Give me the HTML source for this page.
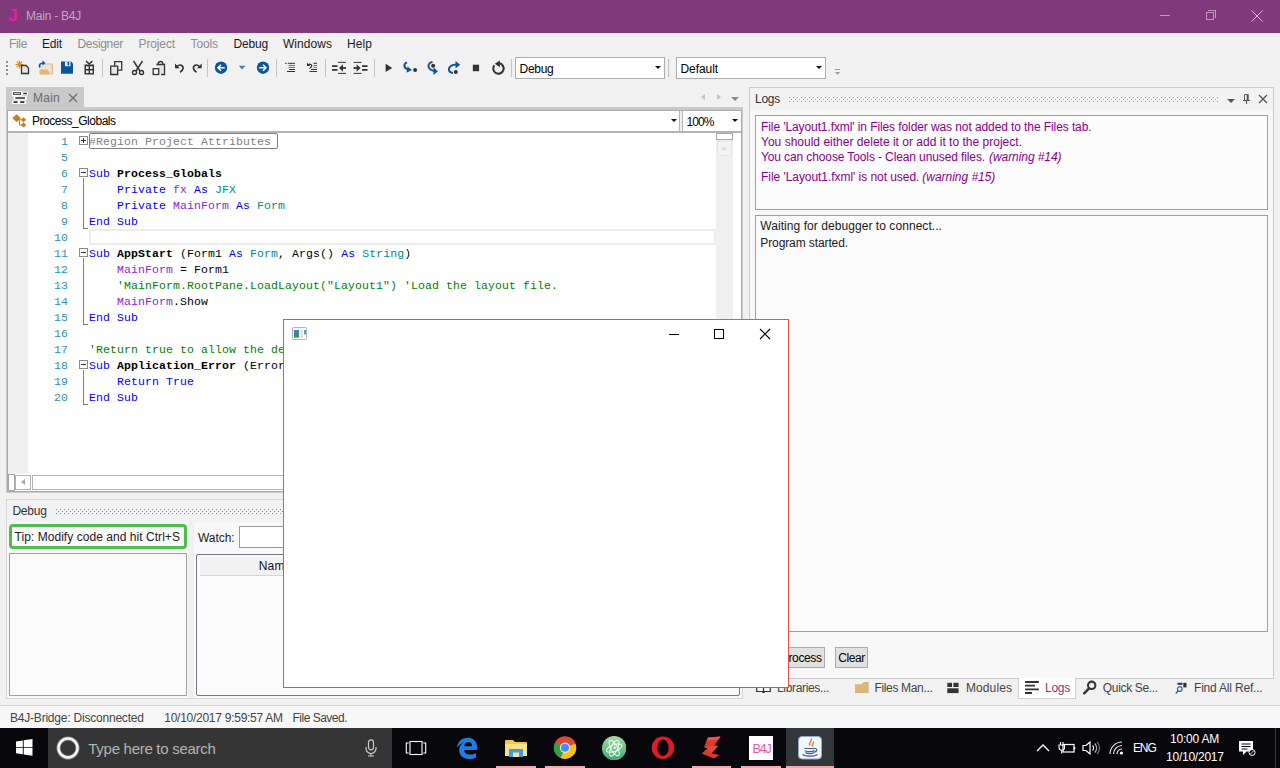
<!DOCTYPE html>
<html><head><meta charset="utf-8"><title>Main - B4J</title>
<style>
*{box-sizing:border-box;margin:0;padding:0}
html,body{width:1280px;height:768px;overflow:hidden;background:#f1f1f1;font-family:"Liberation Sans",sans-serif;font-size:12px;color:#000}
.a{position:absolute}
.t{position:absolute;white-space:nowrap}
.sep{position:absolute;width:1px;background:#c4c4c4;top:59px;height:18px}
.combo{position:absolute;top:57px;height:22px;width:150px;background:#fff;border:1px solid #adadad}
.arr{position:absolute;width:0;height:0;border-left:3px solid transparent;border-right:3px solid transparent;border-top:3px solid #111}
.code{font-family:"Liberation Mono",monospace;font-size:11.5px;letter-spacing:0.1px;line-height:16px;height:16px;position:absolute;white-space:pre;left:89px}
.ln{font-family:"Liberation Mono",monospace;font-size:11.5px;letter-spacing:0.1px;line-height:16px;height:16px;position:absolute;white-space:pre;width:40px;left:28px;text-align:right;color:#2b91af}
.k{color:#0000ff}.ty{color:#008b8b}.v{color:#8c1fd0}.c{color:#008000}.g{color:#808080}.b{font-weight:bold}
.panel{position:absolute;background:#fafafa;border:1px solid #a0a0a0}
</style></head><body>
<div class="a" style="left:0;top:0;width:1280px;height:33px;background:#80397b"></div>
<div class="t" style="left:8px;top:6px;font-size:17px;color:#ec1ea0;line-height:20px;height:20px;letter-spacing:-1.469px;font-weight:bold;">J</div>
<div class="t" style="left:26px;top:8px;font-size:12px;color:#c6a5c4;line-height:16px;height:16px;letter-spacing:-0.236px;">Main - B4J</div>
<div class="a" style="left:1160px;top:15px;width:10px;height:1px;background:#bf9abc"></div>
<div class="a" style="left:1206px;top:12px;width:8px;height:8px;border:1px solid #bf9abc"></div>
<div class="a" style="left:1208px;top:10px;width:8px;height:8px;border-top:1px solid #bf9abc;border-right:1px solid #bf9abc"></div>
<svg class="a" style="left:1251px;top:10px" width="12" height="12" viewBox="0 0 12 12"><path d="M0.500 0.500l11 11M11.500 0.500l-11 11" stroke="#d7bdd5" stroke-width="1"/></svg>
<div class="t" style="left:9px;top:36px;font-size:12px;color:#8d8d8d;line-height:16px;height:16px;letter-spacing:-0.336px;">File</div>
<div class="t" style="left:42px;top:36px;font-size:12px;color:#1b1b1b;line-height:16px;height:16px;letter-spacing:-0.172px;">Edit</div>
<div class="t" style="left:77.5px;top:36px;font-size:12px;color:#8d8d8d;line-height:16px;height:16px;letter-spacing:-0.316px;">Designer</div>
<div class="t" style="left:138.5px;top:36px;font-size:12px;color:#8d8d8d;line-height:16px;height:16px;letter-spacing:-0.123px;">Project</div>
<div class="t" style="left:190.5px;top:36px;font-size:12px;color:#8d8d8d;line-height:16px;height:16px;letter-spacing:-0.103px;">Tools</div>
<div class="t" style="left:233.5px;top:36px;font-size:12px;color:#1b1b1b;line-height:16px;height:16px;letter-spacing:-0.175px;">Debug</div>
<div class="t" style="left:283px;top:36px;font-size:12px;color:#1b1b1b;line-height:16px;height:16px;letter-spacing:0.045px;">Windows</div>
<div class="t" style="left:347px;top:36px;font-size:12px;color:#1b1b1b;line-height:16px;height:16px;letter-spacing:0.078px;">Help</div>
<div class="sep" style="left:102px"></div>
<div class="sep" style="left:207px"></div>
<div class="sep" style="left:276px"></div>
<div class="sep" style="left:325px"></div>
<div class="sep" style="left:374px"></div>
<div class="sep" style="left:511px"></div>
<div class="sep" style="left:668px"></div>
<div class="combo" style="left:515px"><div class="arr" style="left:139px;top:8px"></div></div>
<div class="combo" style="left:676px"><div class="arr" style="left:139px;top:8px"></div></div>
<div class="t" style="left:519.5px;top:61px;font-size:12px;color:#000;line-height:16px;height:16px;letter-spacing:-0.275px;">Debug</div>
<div class="t" style="left:680.5px;top:61px;font-size:12px;color:#000;line-height:16px;height:16px;letter-spacing:-0.076px;">Default</div>
<!-- TOOLBAR-ICONS -->
<svg class="a" style="left:0;top:54px" width="520" height="28" viewBox="0 54 520 28"><rect x="6" y="61" width="2" height="2" fill="#8c8c8c"/><rect x="6" y="65" width="2" height="2" fill="#8c8c8c"/><rect x="6" y="69" width="2" height="2" fill="#8c8c8c"/><rect x="6" y="73" width="2" height="2" fill="#8c8c8c"/><g stroke="#e08a1e" stroke-width="1.200"><path d="M19.500 60.500v8M15.500 64.500h8M16.700 61.700l5.600 5.600M22.300 61.700l-5.600 5.600"/></g><path d="M21.500 65.500h4.500l2.500 2.500v5.500h-7z" fill="#e9e9e9" stroke="#333" stroke-width="1.300"/><path d="M40 64.500h12v10h-12z" fill="#e4e4e4"/><path d="M44 64h8.300v10.800" fill="none" stroke="#e3b877" stroke-width="1.200"/><path d="M39.500 69.500h8l3.500 5h-11.500z" fill="#e3b877"/><path d="M40 67.500c-1.500-2.500 0-4.500 4-4.500" fill="none" stroke="#0a55a0" stroke-width="1.600"/><path d="M42.500 60.500l3 2.500-3 2.500z" fill="#0a55a0"/><path d="M61 61.500h10l2 2v10.300h-12z" fill="#0a55a0"/><rect x="65" y="61.500" width="5.500" height="4.700" fill="#f2f2f2"/><rect x="67.500" y="62" width="1.700" height="3.400" fill="#0a55a0"/><rect x="84.500" y="64.500" width="9.500" height="10" fill="#333"/><path d="M86 61l3.200 3 3.200-3" fill="none" stroke="#333" stroke-width="1.600"/><g fill="#f2f2f2"><rect x="86" y="66.300" width="2.600" height="2.600"/><rect x="90" y="66.300" width="2.600" height="2.600"/><rect x="86" y="70.500" width="2.600" height="2.600"/><rect x="90" y="70.500" width="2.600" height="2.600"/></g><path d="M114.700 61.700h7v8.500h-7z" fill="#f2f2f2" stroke="#333" stroke-width="1.300"/><path d="M110.700 66.200h7v8.300h-7z" fill="#e6e6e6" stroke="#333" stroke-width="1.300"/><g fill="none" stroke="#333" stroke-width="1.400"><path d="M133.500 61l6.500 10M142.500 61l-6.500 10"/><circle cx="134.500" cy="72.500" r="2"/><circle cx="141.500" cy="72.500" r="2"/></g><path d="M156.500 64.500h8v10h-3.500" fill="#e4e4e4" stroke="#333" stroke-width="1.300"/><path d="M158 64.500c0-4 5-4 5 0" fill="none" stroke="#333" stroke-width="1.300"/><rect x="153.200" y="68.700" width="5.500" height="5.800" fill="#f6f6f6" stroke="#333" stroke-width="1.300"/><path d="M177 66.500c3-3 6.500-1 6 2-.3 1.800-1.500 3-3 3.800" fill="none" stroke="#333" stroke-width="1.600"/><path d="M175 63.500v4.800h4.800z" fill="#333"/><path d="M199.500 66.500c-3-3-6.500-1-6 2 .3 1.800 1.500 3 3 3.800" fill="none" stroke="#333" stroke-width="1.600" transform="translate(0,0)"/><path d="M201.700 63.500v4.800h-4.800z" fill="#333"/><circle cx="221" cy="67.700" r="6.200" fill="#0a55a0"/><path d="M224.800 67.700h-6.500M221 64.700l-3 3 3 3" fill="none" stroke="#fff" stroke-width="1.600"/><path d="M238.800 65.800h6.600l-3.300 3.600z" fill="#4a78c0"/><circle cx="263" cy="67.700" r="6.200" fill="#0a55a0"/><path d="M259.200 67.700h6.500M263 64.700l3 3-3 3" fill="none" stroke="#fff" stroke-width="1.600"/><g stroke-width="1"><path d="M285 63.300h1.700M287.800 63.300h7.200M289 69.500h6M287 71.500h8" stroke="#333"/><path d="M288.500 65.400h6.500M288.500 67.400h6.500" stroke="#2e9a2e"/></g><g stroke-width="1"><path d="M313.500 63.300h3.500M311 69.500h6M309.500 71.500h7.500" stroke="#333"/><path d="M313.500 65.400h3.500M313.500 67.400h3.500" stroke="#2e9a2e"/><path d="M308 65.200c2-2 4.500-.5 3.500 1.500l-2 2" fill="none" stroke="#333" stroke-width="1.200"/><path d="M307 62.700v3.300h3.300z" fill="#333"/></g><g stroke="#333"><path d="M338 62.400h8M338 73.400h8" stroke-width="1"/><path d="M332 66.200h5.500M332 69.900h5.500" stroke-width="1.800"/><path d="M346 68h-6" stroke-width="1.800"/></g><path d="M339 68l4-3.800v7.600z" fill="#333"/><g stroke="#333"><path d="M353.600 62.400h8M353.600 73.400h8" stroke-width="1"/><path d="M362 66.200h5.500M362 69.900h5.500" stroke-width="1.800"/><path d="M353.600 68h6" stroke-width="1.800"/></g><path d="M360.600 68l-4-3.800v7.600z" fill="#333"/><path d="M385.600 63.800l6.600 4.100-6.600 4.100z" fill="#333"/><path d="M407 62.300c-3.500 1.500-4 5.500 1.500 7.300" fill="none" stroke="#0a55a0" stroke-width="2"/><path d="M407.500 66.500l4.500 3.500-5.500 2.800z" fill="#0a55a0"/><circle cx="415.100" cy="70" r="2" fill="#333"/><path d="M432.500 62c-5 .5-6.500 8 2.500 9" fill="none" stroke="#0a55a0" stroke-width="2"/><path d="M433.500 67.500l4.500 3.700-4.500 3.700z" fill="#0a55a0"/><circle cx="433.100" cy="65.800" r="2" fill="#333"/><path d="M453 73c-6-.5-6-8 3.500-8.500" fill="none" stroke="#0a55a0" stroke-width="2"/><path d="M455.500 61l4.700 3.700-4.700 3.700z" fill="#0a55a0"/><circle cx="455.800" cy="72" r="2" fill="#333"/><rect x="472.800" y="64.700" width="6.300" height="6.500" fill="#333"/><path d="M494.300 65.300a5.200 5.200 0 1 0 4.700-2" fill="none" stroke="#333" stroke-width="2.100"/><path d="M499.800 60.500l-5 3.300 5 3.400z" fill="#333"/></svg>
<svg class="a" style="left:834px;top:68px" width="7" height="8" viewBox="0 0 7 8"><path d="M1 1.500h5" stroke="#9a9a9a" stroke-width="1"/><path d="M1 4h5l-2.500 3z" fill="#9a9a9a"/></svg>
<div class="a" style="left:6px;top:87px;width:78px;height:21px;background:#c9c9c9"></div>
<div class="a" style="left:6px;top:107px;width:737px;height:4px;background:#c9c9c9"></div>
<div class="t" style="left:33px;top:90px;font-size:12px;color:#6a6a6a;line-height:16px;height:16px;letter-spacing:0.246px;">Main</div>
<svg class="a" style="left:68px;top:93px" width="10" height="10" viewBox="0 0 10 10"><path d="M1 1l8 8M9 1l-8 8" stroke="#6a6a6a" stroke-width="1.200"/></svg>
<div class="a" style="left:6px;top:109px;width:737px;height:384px;background:#fff;border:1px solid #cdcdcd;border-top-color:#c9c9c9;box-shadow:inset 0 0 0 1px #a9a9a9"></div>
<div class="a" style="left:8px;top:131px;width:733px;height:2px;background:#b4b4b4"></div>
<div class="a" style="left:8px;top:133px;width:20px;height:341px;background:#f0f0f0"></div>
<div class="t" style="left:32px;top:113px;font-size:12px;color:#000;line-height:16px;height:16px;letter-spacing:-0.475px;">Process_Globals</div>
<div class="t" style="left:686.4px;top:114px;font-size:12px;color:#000;line-height:16px;height:16px;letter-spacing:-0.851px;">100%</div>
<div class="ln" style="top:133.5px">1</div><div class="code" style="top:133.5px"><span class="g">#Region Project Attributes </span></div>
<div class="ln" style="top:149.5px">5</div><div class="code" style="top:149.5px"></div>
<div class="ln" style="top:165.5px">6</div><div class="code" style="top:165.5px"><span class="k">Sub</span> <span class="b">Process_Globals</span></div>
<div class="ln" style="top:181.5px">7</div><div class="code" style="top:181.5px">    <span class="k">Private</span> <span class="v">fx</span> <span class="k">As</span> <span class="ty">JFX</span></div>
<div class="ln" style="top:197.5px">8</div><div class="code" style="top:197.5px">    <span class="k">Private</span> <span class="v">MainForm</span> <span class="k">As</span> <span class="ty">Form</span></div>
<div class="ln" style="top:213.5px">9</div><div class="code" style="top:213.5px"><span class="k">End Sub</span></div>
<div class="ln" style="top:229.5px">10</div><div class="code" style="top:229.5px"></div>
<div class="ln" style="top:245.5px">11</div><div class="code" style="top:245.5px"><span class="k">Sub</span> <span class="b">AppStart</span> (Form1 <span class="k">As</span> <span class="ty">Form</span>, Args() <span class="k">As</span> <span class="ty">String</span>)</div>
<div class="ln" style="top:261.5px">12</div><div class="code" style="top:261.5px">    <span class="v">MainForm</span> = Form1</div>
<div class="ln" style="top:277.5px">13</div><div class="code" style="top:277.5px">    <span class="c">'MainForm.RootPane.LoadLayout("Layout1") 'Load the layout file.</span></div>
<div class="ln" style="top:293.5px">14</div><div class="code" style="top:293.5px">    <span class="v">MainForm</span>.Show</div>
<div class="ln" style="top:309.5px">15</div><div class="code" style="top:309.5px"><span class="k">End Sub</span></div>
<div class="ln" style="top:325.5px">16</div><div class="code" style="top:325.5px"></div>
<div class="ln" style="top:341.5px">17</div><div class="code" style="top:341.5px"><span class="c">'Return true to allow the default exceptions handler to handle the uncaught exception.</span></div>
<div class="ln" style="top:357.5px">18</div><div class="code" style="top:357.5px"><span class="k">Sub</span> <span class="b">Application_Error</span> (Error <span class="k">As</span> <span class="ty">Exception</span>, StackTrace <span class="k">As</span> <span class="ty">String</span>) <span class="k">As</span> <span class="ty">Boolean</span></div>
<div class="ln" style="top:373.5px">19</div><div class="code" style="top:373.5px">    <span class="k">Return</span> <span class="k">True</span></div>
<div class="ln" style="top:389.5px">20</div><div class="code" style="top:389.5px"><span class="k">End Sub</span></div>
<div class="a" style="left:79px;top:136px;width:9px;height:9px;border:1px solid #8c8c8c;background:#fff"></div><div class="a" style="left:81px;top:140px;width:5px;height:1px;background:#333"></div><div class="a" style="left:83px;top:138px;width:1px;height:5px;background:#333"></div>
<div class="a" style="left:79px;top:168px;width:9px;height:9px;border:1px solid #8c8c8c;background:#fff"></div><div class="a" style="left:81px;top:172px;width:5px;height:1px;background:#333"></div>
<div class="a" style="left:79px;top:248px;width:9px;height:9px;border:1px solid #8c8c8c;background:#fff"></div><div class="a" style="left:81px;top:252px;width:5px;height:1px;background:#333"></div>
<div class="a" style="left:79px;top:360px;width:9px;height:9px;border:1px solid #8c8c8c;background:#fff"></div><div class="a" style="left:81px;top:364px;width:5px;height:1px;background:#333"></div>
<div class="a" style="left:83px;top:178px;width:1px;height:50px;background:#808080"></div>
<div class="a" style="left:83px;top:228px;width:5px;height:1px;background:#808080"></div>
<div class="a" style="left:83px;top:258px;width:1px;height:66px;background:#808080"></div>
<div class="a" style="left:83px;top:324px;width:5px;height:1px;background:#808080"></div>
<div class="a" style="left:83px;top:370px;width:1px;height:34px;background:#808080"></div>
<div class="a" style="left:83px;top:404px;width:5px;height:1px;background:#808080"></div>
<div class="a" style="left:89px;top:133px;width:189px;height:16px;border:1px solid #808080;border-radius:2px"></div>
<div class="a" style="left:89px;top:229px;width:627px;height:16px;border:2px solid #ececec"></div>
<div class="a" style="left:679px;top:111px;width:4px;height:20px;background:#f0f0f0;border-left:1px solid #b4b4b4;border-right:1px solid #b4b4b4"></div>
<div class="arr" style="left:671px;top:119px"></div>
<div class="arr" style="left:732px;top:119px"></div>
<div class="a" style="left:701px;top:94px;width:0;height:0;border-top:3.500px solid transparent;border-bottom:3.500px solid transparent;border-right:4px solid #c3c3c3"></div>
<div class="a" style="left:717px;top:94px;width:0;height:0;border-top:3.500px solid transparent;border-bottom:3.500px solid transparent;border-left:4px solid #c3c3c3"></div>
<div class="a" style="left:731px;top:97px;width:0;height:0;border-left:4px solid transparent;border-right:4px solid transparent;border-top:4px solid #8a8a8a"></div>
<div class="a" style="left:716px;top:133px;width:17px;height:341px;background:#f0f0f0"></div>
<div class="a" style="left:716px;top:133px;width:17px;height:7px;background:#fff;border:1px solid #a8a8a8"></div>
<div class="a" style="left:717px;top:141px;width:15px;height:15px;background:#f3f3f3;border:1px solid #e6e6e6"></div>
<div class="a" style="left:721px;top:146px;width:0;height:0;border-left:3.500px solid transparent;border-right:3.500px solid transparent;border-bottom:4px solid #dcdcdc"></div>
<div class="a" style="left:8px;top:474px;width:733px;height:17px;background:#fff"></div>
<div class="a" style="left:8px;top:474px;width:7px;height:17px;background:#fff;border:1px solid #a8a8a8"></div>
<div class="a" style="left:15px;top:475px;width:16px;height:15px;background:#fff;border:1px solid #b2b2b2"></div>
<div class="a" style="left:21px;top:479px;width:0;height:0;border-top:3.500px solid transparent;border-bottom:3.500px solid transparent;border-right:4px solid #a6a6a6"></div>
<div class="a" style="left:32px;top:475px;width:700px;height:15px;background:#fff;border:1px solid #b2b2b2"></div>
<div class="a" style="left:749px;top:87px;width:525px;height:592px;background:#f8f8f8;border:1px solid #cbcbcb"></div>
<div class="a" style="left:750px;top:88px;width:523px;height:22px;background:#f2f2f2"></div>
<div class="t" style="left:755px;top:91px;font-size:12px;color:#333;line-height:16px;height:16px;letter-spacing:-0.258px;">Logs</div>
<svg class="a" style="left:789px;top:97px" width="430" height="5"><defs><pattern id="dp" width="4" height="4" patternUnits="userSpaceOnUse"><rect x="0" y="0" width="1" height="1" fill="#929292"/><rect x="2" y="2" width="1" height="1" fill="#929292"/><rect x="2" y="0" width="1" height="1" fill="#fafafa"/><rect x="0" y="2" width="1" height="1" fill="#fafafa"/></pattern></defs><rect width="431" height="5" fill="url(#dp)"/></svg>
<div class="a" style="left:1227px;top:99px;width:0;height:0;border-left:4px solid transparent;border-right:4px solid transparent;border-top:4px solid #555"></div>
<svg class="a" style="left:1242px;top:93px" width="9" height="12" viewBox="0 0 9 12"><path d="M2.500 7V1.600h3" fill="none" stroke="#555" stroke-width="1"/><path d="M5.700 1.100v6" stroke="#555" stroke-width="2"/><path d="M1 7.500h7" stroke="#555" stroke-width="1.100"/><path d="M4.500 8v3" stroke="#555" stroke-width="1.100"/></svg>
<svg class="a" style="left:1258px;top:94px" width="10" height="10" viewBox="0 0 10 10"><path d="M1 1l8 8M9 1l-8 8" stroke="#555" stroke-width="1.300"/></svg>
<div class="panel" style="left:755px;top:115px;width:513px;height:95px;background:#fcfcfc"></div>
<div class="t" style="left:761px;top:119px;font-size:12px;color:#8b008b;line-height:16px;height:16px;letter-spacing:-0.093px;">File 'Layout1.fxml' in Files folder was not added to the Files tab.</div>
<div class="t" style="left:761px;top:134px;font-size:12px;color:#8b008b;line-height:16px;height:16px;letter-spacing:0.011px;">You should either delete it or add it to the project.</div>
<div class="t" style="left:761px;top:149px;font-size:12px;color:#8b008b;line-height:16px;height:16px;letter-spacing:-0.115px;">You can choose Tools - Clean unused files.</div>
<div class="t" style="left:989px;top:149px;font-size:12px;color:#8b008b;line-height:16px;height:16px;letter-spacing:-0.067px;font-style:italic;">(warning #14)</div>
<div class="t" style="left:761px;top:169px;font-size:12px;color:#8b008b;line-height:16px;height:16px;letter-spacing:-0.053px;">File 'Layout1.fxml' is not used.</div>
<div class="t" style="left:922.3px;top:169px;font-size:12px;color:#8b008b;line-height:16px;height:16px;letter-spacing:-0.029px;font-style:italic;">(warning #15)</div>
<div class="panel" style="left:755px;top:215px;width:513px;height:417px;background:#fafafa"></div>
<div class="t" style="left:760.3px;top:218px;font-size:12px;color:#1a1a1a;line-height:16px;height:16px;letter-spacing:0.060px;">Waiting for debugger to connect...</div>
<div class="t" style="left:760.3px;top:235px;font-size:12px;color:#1a1a1a;line-height:16px;height:16px;letter-spacing:-0.105px;">Program started.</div>
<div class="a" style="left:760px;top:647px;width:65px;height:21px;background:#e1e1e1;border:1px solid #adadad"></div>
<div class="t" style="left:763.5px;top:650px;font-size:12px;color:#000;line-height:16px;height:16px;letter-spacing:-0.391px;">Kill Process</div>
<div class="a" style="left:835px;top:647px;width:33px;height:21px;background:#e1e1e1;border:1px solid #adadad"></div>
<div class="t" style="left:838.3px;top:650px;font-size:12px;color:#000;line-height:16px;height:16px;letter-spacing:-0.417px;">Clear</div>
<div class="a" style="left:1018px;top:678px;width:58px;height:21px;background:#fff;border:1px solid #d0d0d0;border-top:none"></div>
<div class="t" style="left:777px;top:680px;font-size:12px;color:#444;line-height:16px;height:16px;letter-spacing:-0.336px;">Libraries...</div>
<div class="t" style="left:874.4px;top:680px;font-size:12px;color:#444;line-height:16px;height:16px;letter-spacing:-0.335px;">Files Man...</div>
<div class="t" style="left:966px;top:680px;font-size:12px;color:#444;line-height:16px;height:16px;letter-spacing:0.092px;">Modules</div>
<div class="t" style="left:1045px;top:680px;font-size:12px;color:#80397b;line-height:16px;height:16px;letter-spacing:-0.258px;">Logs</div>
<div class="t" style="left:1102.8px;top:680px;font-size:12px;color:#444;line-height:16px;height:16px;letter-spacing:-0.335px;">Quick Se...</div>
<div class="t" style="left:1194px;top:680px;font-size:12px;color:#444;line-height:16px;height:16px;letter-spacing:-0.192px;">Find All Ref...</div>
<!-- LOGS-ICONS -->
<svg class="a" style="left:947px;top:682px" width="12" height="12" viewBox="0 0 12 12"><rect x="0.300" y="0.800" width="4.700" height="4.200" fill="#333"/><rect x="6.300" y="0.800" width="5.300" height="4.200" fill="#333"/><rect x="0.300" y="6.300" width="11.300" height="4.800" fill="#333"/></svg>
<svg class="a" style="left:1025px;top:680px" width="14" height="15" viewBox="0 0 14 15"><path d="M0 2h13.800M0 5.700h10M0 9.400h13.800M0 13h7" stroke="#333" stroke-width="1.800"/></svg>
<svg class="a" style="left:1083px;top:680px" width="14" height="15" viewBox="0 0 14 15"><circle cx="8.700" cy="5.300" r="3.700" fill="none" stroke="#333" stroke-width="2.100"/><path d="M6 8.300L1.200 13.300" stroke="#333" stroke-width="2.400" stroke-linecap="round"/></svg>
<svg class="a" style="left:1175px;top:682px" width="12" height="13" viewBox="0 0 12 13"><rect x="2.500" y="0.800" width="5" height="2" fill="#333"/><rect x="8.300" y="0.800" width="3.200" height="4.600" fill="#333"/><circle cx="4.800" cy="7" r="2.300" fill="none" stroke="#2a62b8" stroke-width="1.200"/><path d="M3.200 8.800L0.800 11.500" stroke="#2a62b8" stroke-width="1.400"/></svg>
<svg class="a" style="left:855px;top:682px" width="14" height="12" viewBox="0 0 14 12"><path d="M0 2.300h6.500l2-2h4.700v10.700H0z" fill="#dcb67a"/><path d="M8.500.3h4.700v10.700" fill="none" stroke="#c9a468" stroke-width="0.600"/></svg>
<svg class="a" style="left:756px;top:680px" width="15" height="14" viewBox="0 0 15 14"><path d="M0.700 2c2.500-1 4.800-.6 6.800.8 2-1.400 4.300-1.800 6.800-.8v9.500h-13.600z" fill="#f5f5f5" stroke="#333" stroke-width="1.200"/><path d="M7.500 2.800v9" stroke="#333" stroke-width="1.200"/><path d="M6.300 12.200h2.400" stroke="#333" stroke-width="1.600"/></svg>
<svg class="a" style="left:12px;top:91px" width="16" height="13" viewBox="0 0 16 13"><g fill="none" stroke="#fff" stroke-width="3.600" stroke-linecap="square" stroke-linejoin="miter"><rect x="1.500" y="1.700" width="7" height="1.700"/><path d="M11.300 2.500h3.600M3.300 7h9.700M1.500 11.200h4M8.200 11.200h4.200"/></g><rect x="1.500" y="1.700" width="7" height="1.700" fill="#fff" stroke="#2b2b2b" stroke-width="0.900"/><path d="M11.300 2.500h3.600M3.300 7h9.700M1.500 11.200h4M8.200 11.200h4.200" stroke="#2b2b2b" stroke-width="1.700"/></svg>
<svg class="a" style="left:12px;top:114px" width="15" height="14" viewBox="0 0 15 14"><path d="M4.600 0.300l4.300 3.900-4.300 3.900L0.300 4.200z" fill="#c67f1a"/><path d="M11.500 3.200l2.700 2.500-2.700 2.500-2.700-2.500zM11.500 8.500l2.700 2.500-2.700 2.500-2.700-2.500z" fill="#c67f1a"/><path d="M6 5.700h3.500M7.500 5.700v5.300h2" fill="none" stroke="#c67f1a" stroke-width="1"/></svg>
<div class="a" style="left:6px;top:499px;width:737px;height:200px;background:#f8f8f8;border:1px solid #d6d6d6"></div>
<div class="a" style="left:7px;top:500px;width:735px;height:22px;background:#f2f2f2"></div>
<div class="t" style="left:12.4px;top:503px;font-size:12px;color:#333;line-height:16px;height:16px;letter-spacing:-0.235px;">Debug</div>
<svg class="a" style="left:56px;top:509px" width="680" height="5"><rect width="680" height="5" fill="url(#dp)"/></svg>
<div class="a" style="left:9px;top:524px;width:178px;height:25px;background:#fbfbfb;border:3px solid #4cbe4c;border-radius:4px"></div>
<div class="t" style="left:14.5px;top:529px;font-size:12px;color:#222;line-height:16px;height:16px;letter-spacing:0.049px;">Tip: Modify code and hit Ctrl+S</div>
<div class="a" style="left:188px;top:522px;width:6px;height:176px;background:#f0f0f0"></div>
<div class="panel" style="left:9px;top:553px;width:178px;height:143px;background:#fafafa"></div>
<div class="t" style="left:198px;top:530px;font-size:12px;color:#222;line-height:16px;height:16px;letter-spacing:-0.051px;">Watch:</div>
<div class="a" style="left:239px;top:526px;width:300px;height:22px;background:#fff;border:1px solid #9a9a9a"></div>
<div class="a" style="left:196px;top:554px;width:544px;height:142px;background:#fafafa;border:1px solid #6e7782;border-radius:2px"></div>
<div class="a" style="left:200px;top:557px;width:536px;height:19px;background:#f1f1f1;border-bottom:1px solid #d5d5d5"></div>
<div class="t" style="left:258.7px;top:558px;font-size:12px;color:#111;line-height:16px;height:16px;letter-spacing:0.246px;">Name</div>
<div class="a" style="left:0;top:705px;width:1280px;height:23px;background:#f7f7f7;border-top:1px solid #d4d4d4"></div>
<div class="t" style="left:10px;top:710px;font-size:12px;color:#444;line-height:16px;height:16px;letter-spacing:-0.210px;">B4J-Bridge: Disconnected</div>
<div class="t" style="left:164.3px;top:710px;font-size:12px;color:#444;line-height:16px;height:16px;letter-spacing:-0.267px;">10/10/2017 9:59:57 AM</div>
<div class="t" style="left:292.5px;top:710px;font-size:12px;color:#444;line-height:16px;height:16px;letter-spacing:-0.503px;">File Saved.</div>
<div class="a" style="left:283px;top:319px;width:506px;height:369px;background:#fff;border:1px solid #f05050"></div>
<div class="a" style="left:669px;top:334px;width:10px;height:1px;background:#000"></div>
<div class="a" style="left:714px;top:329px;width:10px;height:10px;border:1px solid #000"></div>
<svg class="a" style="left:759px;top:328px" width="12" height="12" viewBox="0 0 12 12"><path d="M1 1l10 10M11 1l-10 10" stroke="#000" stroke-width="1.100"/></svg>
<svg class="a" style="left:292px;top:327px" width="15" height="13" viewBox="0 0 15 13"><defs><linearGradient id="fg" x1="0" y1="0" x2="1" y2="1"><stop offset="0" stop-color="#4a78c2"/><stop offset="1" stop-color="#3a9a58"/></linearGradient></defs><rect x="0.500" y="0.500" width="14" height="12" rx="0.800" fill="#fafafa" stroke="#b2b5bd"/><rect x="2" y="3" width="5" height="7.700" fill="url(#fg)"/><rect x="8.500" y="3" width="2.300" height="8" fill="#e2e2e2"/><rect x="12" y="3" width="2" height="4.500" fill="url(#fg)" opacity="0.800"/></svg>
<div class="a" style="left:0;top:728px;width:1280px;height:40px;background:#08080c"></div>
<div class="a" style="left:48px;top:728px;width:344px;height:40px;background:#353535"></div>
<svg class="a" style="left:16px;top:739px" width="17" height="17" viewBox="0 0 17 17"><path d="M0 2.4L6.8 1.4V7.9H0zM7.7 1.3L16.5 0V7.9H7.7zM0 8.8H6.8V15.3L0 14.3zM7.7 8.8H16.5V16.7L7.7 15.4z" fill="#fff"/></svg>
<svg class="a" style="left:55px;top:735px" width="26" height="26" viewBox="0 0 26 26"><circle cx="13" cy="13" r="9.5" fill="none" stroke="#8a8a8a" stroke-width="4"/><circle cx="13" cy="13" r="9.5" fill="none" stroke="#f4f4f4" stroke-width="2.4"/></svg>
<svg class="a" style="left:364px;top:739px" width="14" height="18" viewBox="0 0 14 18"><rect x="4.5" y="0.8" width="5" height="10" rx="2.5" fill="none" stroke="#c8c8c8" stroke-width="1.2"/><path d="M2 8v1.5a5 5 0 0 0 10 0V8M7 14.5V17M4 17h6" fill="none" stroke="#c8c8c8" stroke-width="1.2"/></svg>
<svg class="a" style="left:405px;top:740px" width="22" height="16" viewBox="0 0 22 16"><rect x="5" y="1.500" width="12" height="13" fill="none" stroke="#fff" stroke-width="1.100"/><path d="M3.700 3H1.300v10h2.400M18.300 3h2.400v10h-2.400" fill="none" stroke="#fff" stroke-width="1.100"/></svg>
<svg class="a" style="left:456px;top:737px" width="22" height="22" viewBox="0 0 22 22"><path d="M1 10.5C1.6 4.5 6 0.8 11.5 0.8c6 0 9.7 4.2 9.7 9.6v2.6H8.2c.2 3 2.6 4.6 5.8 4.6 2.3 0 4.300-.6 6-1.600v4.400c-2 1.100-4.300 1.600-7 1.600-6 0-9.800-3.600-9.800-9 0-3.400 1.800-6.200 4.800-7.800C5.200 6.300 3.200 7.700 1 10.500zM8.300 9.200h7.700c0-2.500-1.400-4.100-3.700-4.100-2.200 0-3.700 1.700-4 4.100z" fill="#1a7fe0"/></svg>
<svg class="a" style="left:504px;top:738px" width="24" height="20" viewBox="0 0 24 20"><path d="M1 3a1 1 0 0 1 1-1h7l2 2h11a1 1 0 0 1 1 1v13H1z" fill="#f5c64f"/><path d="M1 6h22v12H1z" fill="#fbe08a"/><path d="M5 11h14v8H5z" fill="#3f9be0"/><path d="M9 14.500h6V19H9z" fill="#fbe08a"/></svg>
<div class="a" style="left:496px;top:766px;width:40px;height:2px;background:#f6a8ae"></div>
<svg class="a" style="left:553px;top:736px" width="24" height="24" viewBox="0 0 24 24"><g transform="translate(12 11.700) scale(0.968) translate(-12 -12)"><circle cx="12" cy="12" r="11.500" fill="#e33b2e"/><path d="M12 12L2.040 6.250A11.500 11.500 0 0 0 7.500 22.600z" fill="#2ba14b"/><path d="M12 12L7.500 22.600A11.500 11.500 0 0 0 22.800 8H12z" fill="#fbc116"/><path d="M12 12L22.800 8A11.500 11.500 0 0 0 2.040 6.250z" fill="#dd4b3e"/><circle cx="12" cy="12" r="5.300" fill="#f1f1f1"/><circle cx="12" cy="12" r="4.200" fill="#4b8bf5"/></g></svg>
<div class="a" style="left:545px;top:766px;width:40px;height:2px;background:#f6a8ae"></div>
<svg class="a" style="left:602px;top:735.500px" width="24.400" height="24.400" viewBox="0 0 24 24"><defs><linearGradient id="ag" x1="0" y1="0" x2="0" y2="1"><stop offset="0" stop-color="#a6dba0"/><stop offset="1" stop-color="#3ba776"/></linearGradient></defs><circle cx="12" cy="12" r="12" fill="url(#ag)"/><g fill="none" stroke="#f3fff6" stroke-width="1"><ellipse cx="12" cy="12" rx="8" ry="3.200" transform="rotate(-20 12 12)"/><ellipse cx="12" cy="12" rx="8.500" ry="3.200" transform="rotate(60 12 12)"/><ellipse cx="12" cy="12" rx="8.500" ry="3.200" transform="rotate(115 12 12)"/></g><circle cx="12.500" cy="11.500" r="1.200" fill="#f3fff6"/></svg>
<svg class="a" style="left:651px;top:736px" width="24" height="24" viewBox="0 0 24 24"><defs><linearGradient id="og" x1="0" y1="0" x2="1" y2="1"><stop offset="0" stop-color="#f01828"/><stop offset="1" stop-color="#c8202a"/></linearGradient></defs><ellipse cx="12" cy="11.700" rx="11.200" ry="11.300" fill="url(#og)"/><ellipse cx="12" cy="11.700" rx="5.600" ry="8.200" fill="#08080c"/></svg>
<svg class="a" style="left:700px;top:735px" width="22" height="25" viewBox="700 735 22 25"><path d="M708 737.500L720.500 736.500L714.500 745.500L718 746L711.500 753.500L719.500 755L714 758.600L701.700 753.600L707.500 748.300L704 747.300Z" fill="#d63a30"/><path d="M708 737.500L720.500 736.500L718.500 739.500L706.500 740.500Z" fill="#e8574a"/><path d="M704 747.300L714 745.500L718 746L711.500 753.500L707.500 748.300Z" fill="#e04a3e"/></svg>
<div class="a" style="left:692px;top:766px;width:39px;height:2px;background:#f6a8ae"></div>
<div class="a" style="left:749px;top:736px;width:24px;height:24px;background:#fff"></div>
<div class="a" style="left:741px;top:766px;width:40px;height:2px;background:#f6a8ae"></div>
<div class="a" style="left:786px;top:728px;width:48px;height:40px;background:#33363a"></div>
<svg class="a" style="left:798px;top:736px" width="24" height="24" viewBox="0 0 24 24"><rect x="0.500" y="0.500" width="23" height="22.500" rx="3.500" fill="#f1f4f8" stroke="#8fa9c6"/><path d="M13 2.500c2.200 2.300-3.200 4-1 7M15.200 5.500c1.600 1.600-2 2.800-.6 5" fill="none" stroke="#e8762c" stroke-width="1.300"/><g fill="none" stroke="#46638f" stroke-width="1.200"><path d="M6.500 12.500h10.500M7 14.500c1 1.600 8 1.600 9.500 0M7.500 16.500c1.500 1.500 7 1.500 8.500 0M17 12.500c3 0 2 3.500-.8 3.600"/><path d="M4.500 18.500c3 2.200 12 2.200 15 0" stroke-width="1.400"/></g></svg>
<div class="a" style="left:786px;top:766px;width:48px;height:2px;background:#f6a8ae"></div>
<svg class="a" style="left:1036px;top:743px" width="14" height="9" viewBox="0 0 14 9"><path d="M1 8l6-6 6 6" fill="none" stroke="#fff" stroke-width="1.400"/></svg>
<svg class="a" style="left:1058px;top:742px" width="18" height="12" viewBox="0 0 18 12"><rect x="5" y="2.500" width="11" height="7.500" fill="none" stroke="#fff" stroke-width="1.200"/><path d="M16.500 5v2.500" stroke="#fff" stroke-width="1.500"/><path d="M2.500 0v3M5 0v3M1 3h5.500v2.500a2.700 2.700 0 0 1-5.500 0zM3.700 8v3.500" fill="none" stroke="#fff" stroke-width="1.100"/></svg>
<svg class="a" style="left:1082px;top:741px" width="18" height="14" viewBox="0 0 18 14"><path d="M1 4.500h3l4-3.500v12l-4-3.500H1z" fill="none" stroke="#fff" stroke-width="1.200"/><path d="M10.500 4.500a3.500 3.500 0 0 1 0 5" fill="none" stroke="#fff" stroke-width="1.100"/><path d="M12.800 2.500a6.500 6.500 0 0 1 0 9" fill="none" stroke="#bbb" stroke-width="1.100"/><path d="M15 .8a9 9 0 0 1 0 12.400" fill="none" stroke="#777" stroke-width="1.100"/></svg>
<svg class="a" style="left:1109px;top:741px" width="15" height="14" viewBox="0 0 15 14"><g fill="none" stroke="#e8e8e8" stroke-width="1.100"><path d="M1 13A12 12 0 0 1 13 1"/><path d="M4.500 13A8.500 8.500 0 0 1 13 4.500"/><path d="M8 13A5 5 0 0 1 13 8"/></g><circle cx="12.500" cy="12" r="1.600" fill="#fff"/></svg>
<svg class="a" style="left:1238px;top:740px" width="18" height="17" viewBox="0 0 18 17"><path d="M1 1h14v10.500H8.500L5 15v-3.500H1z" fill="#fff"/><path d="M3.500 4h9M3.500 6.500h9M3.500 9h6" stroke="#08080c" stroke-width="1"/><circle cx="14" cy="12.500" r="3" fill="#08080c" stroke="#fff" stroke-width="1"/><path d="M12.500 14l3-3" stroke="#fff" stroke-width="0.800"/></svg>
<div class="t" style="left:88.3px;top:739px;font-size:15px;color:#b4b4b4;line-height:20px;height:20px;letter-spacing:-0.283px;">Type here to search</div>
<div class="t" style="left:752.5px;top:741px;font-size:12.5px;color:#ea55b0;line-height:16px;height:16px;letter-spacing:-1.182px;">B4J</div>
<div class="t" style="left:1133px;top:740px;font-size:12px;color:#fff;line-height:16px;height:16px;letter-spacing:-1.139px;">ENG</div>
<div class="t" style="left:1170px;top:731px;font-size:12px;color:#fff;line-height:16px;height:16px;letter-spacing:-0.213px;">10:00 AM</div>
<div class="t" style="left:1166px;top:749px;font-size:12px;color:#fff;line-height:16px;height:16px;letter-spacing:-0.236px;">10/10/2017</div>
<div class="a" style="left:1275px;top:728px;width:1px;height:40px;background:#3a3a3a"></div>
</body></html>
